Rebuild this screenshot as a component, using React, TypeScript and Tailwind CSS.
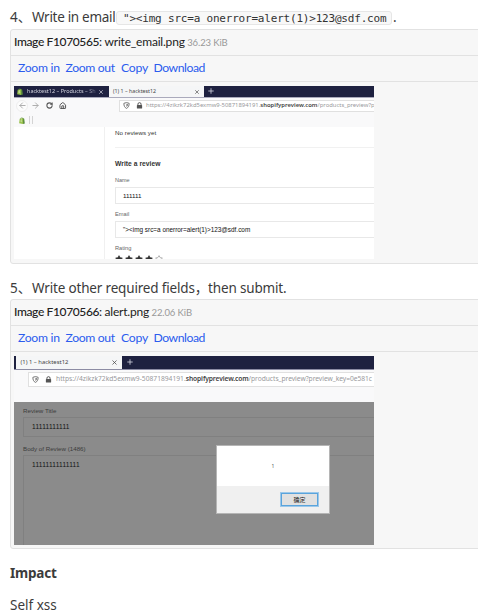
import React from "react";
import { ArrowLeft, ArrowRight, House, RotateCw, Star, X, Plus } from "lucide-react";

function Bag({ className = "" }: { className?: string }) {
  return (
    <svg viewBox="0 0 12 14" className={`shrink-0 ${className}`}>
      <path d="M1.5 3.5 8 2.2V14L.3 12.6z" fill="#95bf47" />
      <path d="M8 2.2 10.4 3.6 11.7 12.8 8 14z" fill="#5e8e3e" />
      <path d="M3 4c.3-2 1.300-3.300 2.500-3.300S7.500 2 7.500 3.600" fill="none" stroke="#5e8e3e" strokeWidth=".8" />
      <path d="M6 6c-1.800-.8-2.600.8-1.400 1.600 1.400 1 .8 2.600-1.400 1.700" fill="none" stroke="#fff" strokeWidth="1.100" />
    </svg>
  );
}

function ShieldIcon() {
  return (
    <svg viewBox="0 0 12 12" className="size-[7px] shrink-0">
      <path d="M1.500 2.200 6 1l4.500 1.200c0 4.300-1 7-4.500 8.800C2.500 9.200 1.500 6.500 1.500 2.200z" fill="none" stroke="#666" strokeWidth="1.500" />
      <path d="M6 3.200v5.400c1.700-1.200 2.300-2.600 2.400-4.800z" fill="#666" />
    </svg>
  );
}

function LockIcon() {
  return (
    <svg viewBox="0 0 12 12" className="ml-[6px] size-[7px] shrink-0">
      <path d="M3.300 6V3.800a2.700 2.700 0 0 1 5.400 0V6" fill="none" stroke="#555" strokeWidth="1.700" />
      <rect x="1.500" y="5.300" width="9" height="6" rx="1" fill="#555" />
    </svg>
  );
}

function Links() {
  return (
    <div className="flex h-[26px] items-center whitespace-nowrap border-b border-[#e2e2e2] pb-px pl-[7px] font-[Lato,sans-serif] text-[12.200px] leading-none text-[#2b5cee]">
      <a className="w-[47.500px] tracking-[-0.300px]">Zoom in</a>
      <a className="w-[55.500px] tracking-[-0.350px]">Zoom out</a>
      <a className="w-[32.500px] tracking-[-0.200px]">Copy</a>
      <a className="tracking-[-0.450px]">Download</a>
    </div>
  );
}

function Panel({ id, name, size, children, className = "" }: {
  id: string; name: string; size: string; children: React.ReactNode; className?: string;
}) {
  return (
    <section className={`ml-2.5 w-[480px] rounded-[3px] border border-[#e2e2e2] bg-[#f7f7f7] ${className}`}>
      <div className="flex h-[26px] items-center whitespace-nowrap border-b border-[#e2e2e2] pb-px pl-[3px] font-[Lato,sans-serif] text-[12px] leading-none text-[#222]">
        <span className="w-[90.500px] font-medium tracking-[-0.370px]">{id}:</span>
        <span className="tracking-[-0.200px]">{name}</span>
        <span className="ml-[2.500px] pt-px text-[9.500px] tracking-[-0.100px] text-[#999]">{size}</span>
      </div>
      <Links />
      {children}
    </section>
  );
}

function UrlBar({ children, className = "" }: { children?: React.ReactNode; className?: string }) {
  return (
    <div className={`flex min-w-0 flex-1 items-center overflow-hidden whitespace-nowrap border border-r-0 border-[#e0e0e0] bg-white text-[#99999c] ${className}`}>
      <ShieldIcon />
      <LockIcon />
      {children}
    </div>
  );
}

function WriteEmailShot() {
  return (
    <div className="ml-[3px] mt-1 h-[173px] w-[360px] overflow-hidden bg-[#f9f9fa] font-['Liberation_Sans',sans-serif] text-[6.200px] leading-none">
      <div className="flex h-[12px] border-b border-[#aaaabc] bg-[#1e2140] font-['Noto_Sans',sans-serif] text-[5.500px]">
        <div className="flex w-[95px] items-center text-[#e4e4ec]">
          <Bag className="ml-[3px] h-[7px] w-[6px]" />
          <span className="ml-[4px] w-[72px] whitespace-nowrap bg-gradient-to-r from-[#e8e8f0] from-80% to-[#3c3e58] bg-clip-text text-transparent">hacktest12 – Products – Sh</span>
          <X className="-ml-px size-[6px]" strokeWidth={2.500} />
        </div>
        <div className="flex w-[95px] items-center bg-[#f5f6f7] text-[#444]">
          <span className="ml-[4px] w-[81px] text-[5.300px]">(1) 1 – hacktest12</span>
          <X className="size-[6px]" strokeWidth={2.500} />
        </div>
        <Plus className="ml-[3px] mt-[1px] size-[8px] text-[#d2d2de]" strokeWidth={2.500} />
      </div>
      <div className="flex h-[15px] items-center text-[#555]">
        <span className="ml-[2px] flex size-[12px] items-center justify-center rounded-full border border-[#eee] bg-[#fcfcfc]"><ArrowLeft className="size-[9px] shrink-0 text-[#aaa]" strokeWidth={2.500} /></span>
        <ArrowRight className="ml-[3px] size-[9px] text-[#aaa]" strokeWidth={2.500} />
        <RotateCw className="ml-[6px] size-[7px]" strokeWidth={3.500} />
        <House className="ml-[6px] size-[7.500px]" strokeWidth={3.200} />
        <UrlBar className="ml-[52px] h-[12px] pl-[3px]">
          <span className="ml-[3.500px] font-['Noto_Sans',sans-serif] text-[5.900px]">https://4zikzk72kd5exmw9-50871894191.<b className="font-semibold text-[#444]">shopifypreview.com</b>/products_preview?p</span>
        </UrlBar>
      </div>
      <div className="flex h-[14px] items-center">
        <Bag className="ml-[5px] h-[7px] w-[6px]" />
        <span className="ml-[4px] h-[8px] w-[4px] border-x border-[#d4d4d4]" />
      </div>
      <div className="flex h-[132px] bg-white text-[#555]">
        <div className="w-[91px] border-r border-[#f0f0f0]" />
        <div className="flex-1 pl-[10px]">
          <div className="h-[21px] border-b border-[#f1f1f1] pt-[3px] tracking-[0.050px] text-[#333]">No reviews yet</div>
          <div className="pt-[12.500px] text-[6.700px] font-bold tracking-[0.050px] text-[#333]">Write a review</div>
          <div className="mt-[11px] h-[9px] text-[5.500px] text-[#666]">Name</div>
          <div className="flex h-[17px] items-center border border-r-0 border-[#e8e8e8] pl-[7px] text-[#111]">111111</div>
          <div className="mt-[8px] h-[9px] text-[5.700px] text-[#666]">Email</div>
          <div className="flex h-[17px] items-center border border-r-0 border-[#e8e8e8] pl-[7px] text-[6.400px] text-[#111]">{'"><img src=a onerror=alert(1)>123@sdf.com'}</div>
          <div className="mt-[8px] h-[9px] text-[5.700px] text-[#666]">Rating</div>
          <div className="flex gap-[2px] text-[#333]">
            {[0, 1, 2, 3].map((n) => <Star key={n} className="size-[8px]" fill="#333" />)}
            <Star className="size-[8px] text-[#888]" />
          </div>
        </div>
      </div>
    </div>
  );
}

function AlertShot() {
  return (
    <div className="relative ml-[3px] mt-1 h-[189px] w-[360px] overflow-hidden bg-[#f9f9fa] font-['Liberation_Sans',sans-serif] text-[6.500px] leading-none">
      <div className="flex h-[14px] border-b border-[#8c8ca4] bg-[#1e2140] pl-[2px]">
        <div className="flex w-[106px] items-center bg-[#f5f6f7] font-['Noto_Sans',sans-serif] text-[5.900px] text-[#444]">
          <span className="ml-[4.500px] w-[90.500px]">(1) 1 – hacktest12</span>
          <X className="size-[7px]" strokeWidth={2.500} />
        </div>
        <Plus className="ml-[4px] mt-[2px] size-[8px] text-[#d2d2de]" strokeWidth={2.500} />
      </div>
      <div className="flex h-[32px] items-start pl-[14px] pt-[2px]">
        <UrlBar className="h-[15px] pl-[3px]">
          <span className="ml-[4px] font-['Noto_Sans',sans-serif] text-[6.700px]">https://4zikzk72kd5exmw9-50871894191.<b className="font-semibold tracking-[-0.120px] text-[#444]">shopifypreview.com</b><span className="tracking-[-0.040px]">/products_preview?preview_key=0e581c</span></span>
        </UrlBar>
      </div>
      <div className="h-[143px] bg-[#8b8b8b] pl-[9px] text-[#111]">
        <div className="h-[15px] pt-[6px] text-[6.200px] text-[#3c3c3c]">Review Title</div>
        <div className="flex h-[20px] items-center border border-r-0 border-[#808080] pl-[8px] tracking-[0.250px]">11111111111</div>
        <div className="h-[18px] pt-[9px] text-[6.200px] text-[#3c3c3c]">Body of Review (1486)</div>
        <div className="h-[90px] border border-b-0 border-r-0 border-[#808080] pl-[8px] pt-[6px] tracking-[0.250px]">11111111111111</div>
      </div>
      <div className="absolute left-[202px] top-[89px] flex h-[69px] w-[114px] flex-col border border-[#b5b5b5] bg-white">
        <div className="flex flex-1 items-center justify-center font-['Noto_Sans',sans-serif] text-[5px] text-[#555]">1</div>
        <div className="flex h-[27px] items-center justify-end bg-[#f0f0f0] pr-[11px]">
          <span className="flex h-[13px] w-[37px] items-center justify-center border border-[#5aa4dc] bg-[#e1e1e1] font-['Noto_Sans_CJK_SC',sans-serif] text-[6px] text-[#222] outline-[0.500px] outline-[#9cc8ea]">确定</span>
        </div>
      </div>
    </div>
  );
}

export default function App() {
  return (
    <main className="h-[616px] w-[478px] overflow-hidden bg-white font-['Noto_Sans','Noto_Sans_CJK_SC',sans-serif] text-[13.500px] leading-none text-[#3b3b3b]">
      <div className="flex h-[29px] items-center whitespace-nowrap pl-2.5 pt-[7px]">
        <span className="w-[22px]">4、</span>
        <span className="w-[84px] tracking-[-0.300px]">Write in email</span>
        <code className="flex h-[14px] w-[276px] shrink-0 items-center rounded-[3px] border border-[#e6e6e6] bg-[#f8f8f8] pl-[6px] font-['DejaVu_Sans_Mono',monospace] text-[11px] leading-none tracking-[-0.200px] text-[#333]">{'"><img src=a onerror=alert(1)>123@sdf.com'}</code>
        <span className="ml-px">.</span>
      </div>
      <Panel id="Image F1070565" name="write_email.png" size="36.23 KiB" className="h-[235px]"><WriteEmailShot /></Panel>
      <div className="flex h-[35px] items-center whitespace-nowrap pl-2.5 pt-[14px]">
        <span className="w-[22px]">5、</span>
        <span className="tracking-[-0.170px]">Write other required fields，then submit.</span>
      </div>
      <Panel id="Image F1070566" name="alert.png" size="22.06 KiB" className="h-[250px]"><AlertShot /></Panel>
      <h2 className="mt-[16px] pl-2.5 text-[13.500px] font-bold leading-[16px] tracking-[-0.200px]">Impact</h2>
      <p className="mt-[16px] pl-2.5 text-[13.500px] leading-[16px]">Self xss</p>
    </main>
  );
}
